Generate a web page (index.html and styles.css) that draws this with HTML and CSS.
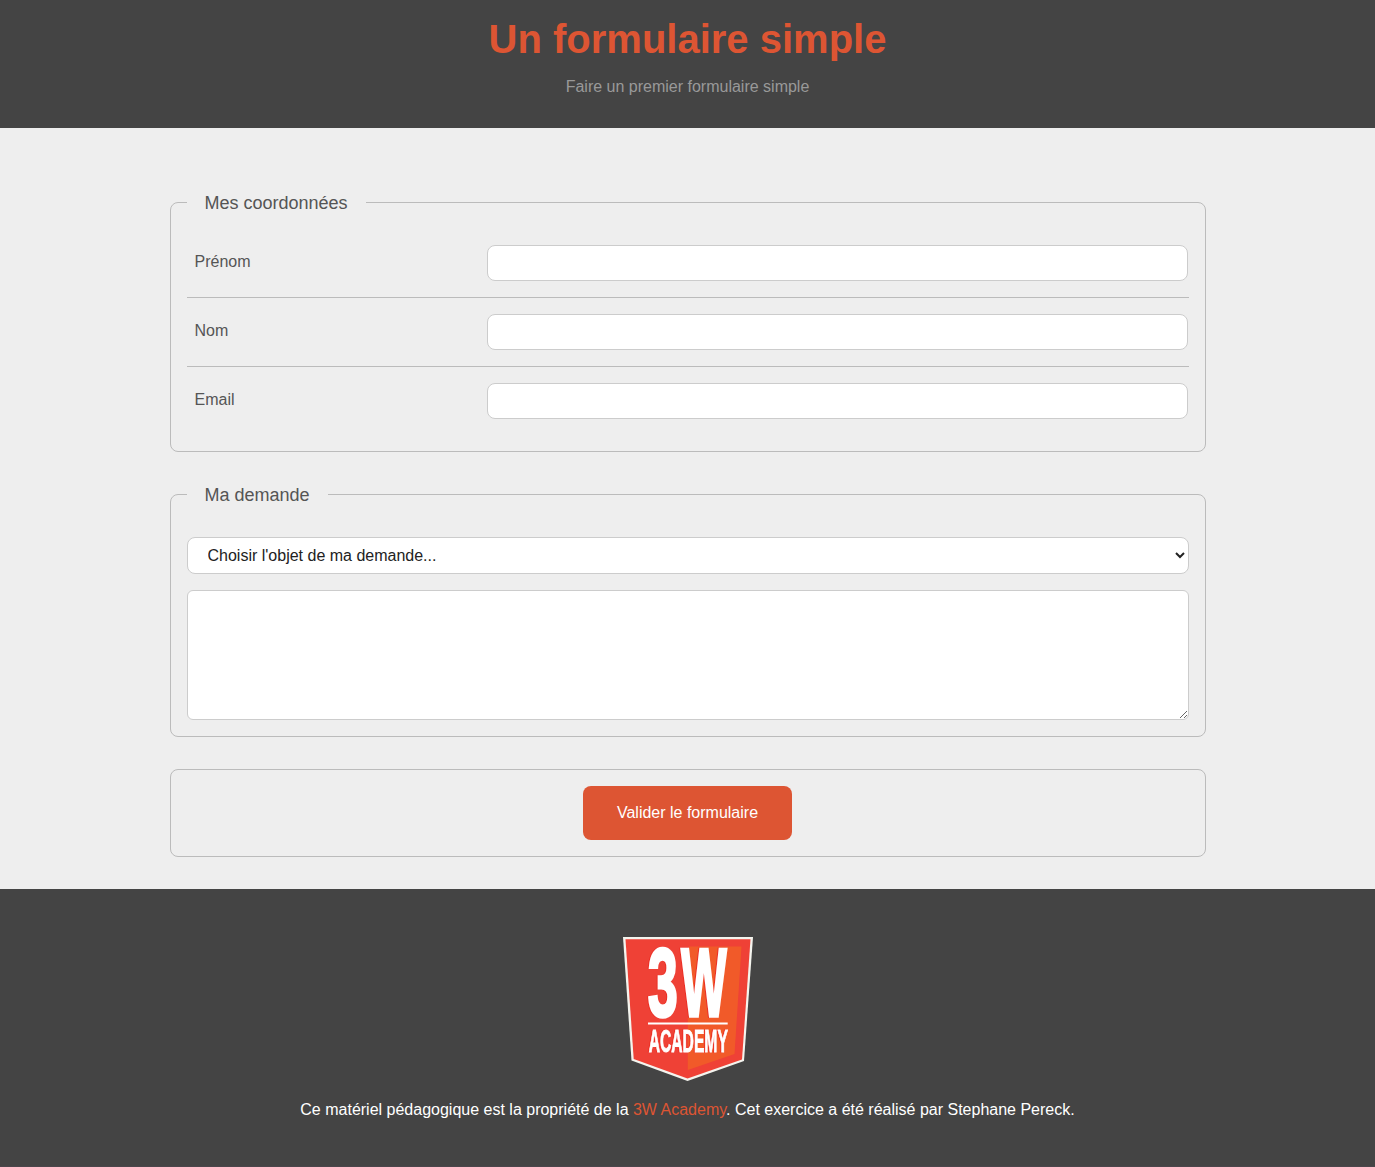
FILE: index.html
```html
<!DOCTYPE html>
<html lang="fr">
<head>
<meta charset="utf-8">
<title>Un formulaire simple</title>
<link rel="stylesheet" href="styles.css">
</head>
<body>
<header class="page-header">
  <h1 class="title">Un formulaire simple</h1>
  <p class="subtitle">Faire un premier formulaire simple</p>
</header>
<main class="content">
  <form class="form">
    <fieldset class="group">
      <legend class="legend">Mes coordonnées</legend>
      <div class="row"><label class="label" for="prenom">Prénom</label><input class="input" type="text" id="prenom"></div>
      <div class="row"><label class="label" for="nom">Nom</label><input class="input" type="text" id="nom"></div>
      <div class="row"><label class="label" for="email">Email</label><input class="input" type="email" id="email"></div>
    </fieldset>
    <fieldset class="group">
      <legend class="legend">Ma demande</legend>
      <select class="select"><option>Choisir l'objet de ma demande...</option></select>
      <textarea class="textarea"></textarea>
    </fieldset>
    <fieldset class="group group-submit">
      <button class="submit" type="button">Valider le formulaire</button>
    </fieldset>
  </form>
</main>
<footer class="page-footer">
  <svg class="logo" viewBox="0 0 130 144" role="img" aria-label="3W Academy">
    <path d="M0 0H130L121 124L64.5 144L8.5 123.5Z" fill="#f4f4ee"/>
    <path d="M2.5 2.3H127.5L119 122.4L64.5 141.4L10.7 122Z" fill="#ef4136"/>
    <path d="M66 9.5H118.5L111.5 117L64.8 133V84Z" fill="#f15a29"/>
    <g class="logo-text">
      <text class="logo-big" transform="translate(25 78.5) scale(.55 1)">3</text>
      <text class="logo-big" transform="translate(58.3 78.5) scale(.495 1)">W</text>
      <text class="logo-small" transform="translate(25.7 114.5) scale(.505 1)">ACADEMY</text>
    </g>
    <path d="M25 85.6H104.7V87.6H25Z" fill="#fff"/>
  </svg>
  <p class="credits">Ce matériel pédagogique est la propriété de la <a class="link" href="#">3W Academy</a>. Cet exercice a été réalisé par Stephane Pereck.</p>
</footer>
</body>
</html>
```
FILE: styles.css
```css
* { box-sizing: border-box; }
body {
  margin: 0;
  background: #444;
  color: #555;
  font: 16px/20px "Liberation Sans", Arial, sans-serif;
}
.page-header {
  height: 128px;
  padding-top: 16px;
  background: #444;
  text-align: center;
}
.title {
  margin: 0;
  color: #dd5533;
  font-size: 40px;
  line-height: 46px;
}
.subtitle { margin: 15px 0 0; color: #999; }
.content { padding: 64px 0 32px; background: #eee; }
.form {
  display: flex;
  flex-direction: column;
  gap: 32px;
  width: 1036px;
  margin: 0 auto;
}
.group {
  min-width: 0;
  margin: 0;
  padding: 16px;
  border: 1px solid #bbb;
  border-radius: 8px;
}
.legend { padding: 1px 18px 0; font-size: 18px; line-height: 20px; }
.row { display: flex; padding: 16px 0; }
.row + .row { border-top: 1px solid #bbb; }
.label { width: 30%; padding: 7px 8px; }
.input {
  width: 70%;
  height: 36px;
  border: 1px solid #ccc;
  border-radius: 8px;
  background: #fff;
  font: inherit;
}
.select {
  display: block;
  width: 100%;
  height: 37px;
  margin-top: 16px;
  padding: 0 0 0 16px;
  border: 1px solid #ccc;
  border-radius: 8px;
  background: #fff;
  color: #222;
  font: inherit;
}
.textarea {
  display: block;
  width: 100%;
  height: 130px;
  margin-top: 16px;
  border: 1px solid #ccc;
  border-radius: 6px;
  background: #fff;
  font: inherit;
}
.group-submit { text-align: center; }
.submit {
  display: block;
  width: 209px;
  height: 54px;
  margin: 0 auto;
  border: 0;
  border-radius: 8px;
  background: #dd5533;
  color: #fff;
  font: inherit;
}
.page-footer {
  height: 278px;
  padding-top: 48px;
  border-bottom: 1px solid #4b454b;
  background: #444;
  color: #fff;
  text-align: center;
}
.logo { display: block; width: 130px; height: 144px; margin: 0 auto; }
.logo-text { fill: #fff; stroke: #fff; filter: drop-shadow(-1px 0 0 #ec2f25); }
.logo-big { font-size: 97px; font-weight: bold; stroke-width: 3.6px; }
.logo-small { font-size: 31px; font-weight: bold; stroke-width: .9px; }
.credits { margin: 19px 0 0; }
.link { color: #dd5533; text-decoration: none; }
```
